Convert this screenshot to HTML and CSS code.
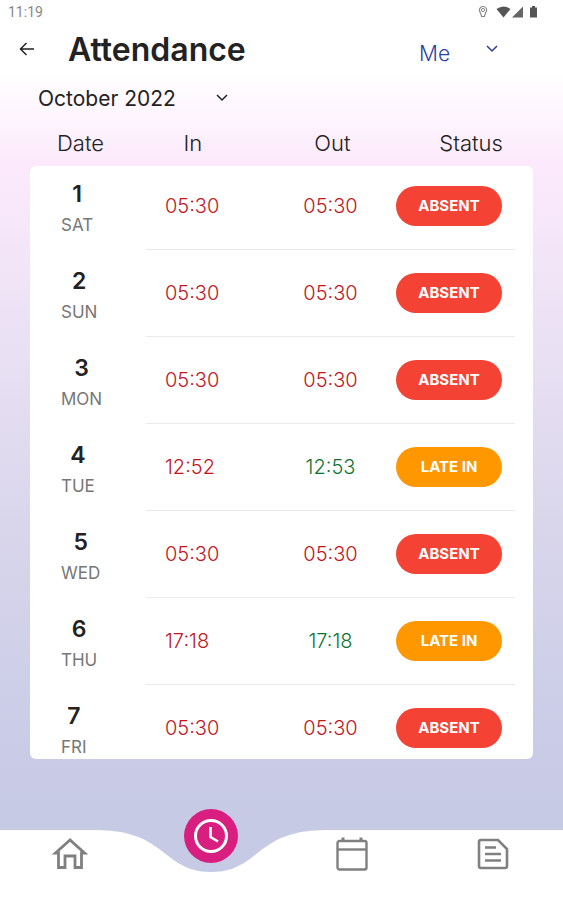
FILE: index.html
```html
<!DOCTYPE html>
<html lang="en">
<head>
  <meta charset="UTF-8">
  <meta name="viewport" content="width=device-width, initial-scale=1.0">
  <title>Attendance</title>
  <link rel="stylesheet" href="styles.css">
</head>
<body>
  <div class="status-bar">
    <span>11:19</span>
    <svg class="status-icons" width="60" height="14" viewBox="0 0 60 14" aria-hidden="true">
      <path d="M5 1.500a3.600 3.600 0 0 0-3.600 3.600c0 1.800 1.600 3 2.200 6.400h2.800c.6-3.400 2.200-4.600 2.200-6.400A3.600 3.600 0 0 0 5 1.500z" fill="none" stroke="#888" stroke-width="1.200"/>
      <circle cx="5" cy="5" r="1.600" fill="none" stroke="#888"/>
      <path d="M18.500 4q7-5 14 0l-7 8.500z" fill="#555"/>
      <path d="M34 12.500h11V1.500z" fill="#666"/>
      <path d="M52 2.500h2V1h3v1.500h2V12.500h-7z" fill="#555"/>
    </svg>
  </div>

  <header class="header">
    <button class="back" aria-label="Back">
      <svg width="16" height="16" viewBox="0 0 16 16"><path d="M15 8H2M7.500 2L1.500 8L7.500 14"/></svg>
    </button>
    <h1>Attendance</h1>
    <div class="picker person">
      <select aria-label="Person">
        <option>Me</option>
      </select>
      <svg width="12" height="8" viewBox="0 0 12 8"><path d="M1 1l5 5l5-5"/></svg>
    </div>
  </header>

  <div class="picker month">
    <select aria-label="Month">
      <option>October 2022</option>
    </select>
    <svg width="12" height="8" viewBox="0 0 12 8"><path d="M1 1l5 5l5-5"/></svg>
  </div>

  <table class="attendance">
    <thead>
      <tr><th>Date</th><th>In</th><th>Out</th><th>Status</th></tr>
    </thead>
    <tbody>
      <tr>
        <td class="date"><div><b>1</b><span>SAT</span></div></td>
        <td class="in">05:30</td>
        <td class="out">05:30</td>
        <td class="status"><span class="badge absent">ABSENT</span></td>
      </tr>
      <tr>
        <td class="date"><div><b>2</b><span>SUN</span></div></td>
        <td class="in">05:30</td>
        <td class="out">05:30</td>
        <td class="status"><span class="badge absent">ABSENT</span></td>
      </tr>
      <tr>
        <td class="date"><div><b>3</b><span>MON</span></div></td>
        <td class="in">05:30</td>
        <td class="out">05:30</td>
        <td class="status"><span class="badge absent">ABSENT</span></td>
      </tr>
      <tr>
        <td class="date"><div><b>4</b><span>TUE</span></div></td>
        <td class="in">12:52</td>
        <td class="out ok">12:53</td>
        <td class="status"><span class="badge late">LATE IN</span></td>
      </tr>
      <tr>
        <td class="date"><div><b>5</b><span>WED</span></div></td>
        <td class="in">05:30</td>
        <td class="out">05:30</td>
        <td class="status"><span class="badge absent">ABSENT</span></td>
      </tr>
      <tr>
        <td class="date"><div><b>6</b><span>THU</span></div></td>
        <td class="in">17:18</td>
        <td class="out ok">17:18</td>
        <td class="status"><span class="badge late">LATE IN</span></td>
      </tr>
      <tr>
        <td class="date"><div><b>7</b><span>FRI</span></div></td>
        <td class="in">05:30</td>
        <td class="out">05:30</td>
        <td class="status"><span class="badge absent">ABSENT</span></td>
      </tr>
    </tbody>
  </table>

  <nav class="tabs">
    <a href="#" aria-label="Home">
      <svg width="36" height="32" viewBox="0 0 36 32" fill="none" stroke="#808080" stroke-width="2.800"><path d="M18 2L3.500 15H6.500V29.500H13V18H23V29.500H29.500V15H32.500z"/></svg>
    </a>
    <div class="notch">
      <svg class="wave" width="240" height="43" viewBox="0 0 240 43"><path d="M0 0C40 0 55 8 76 25C92 38 104 42 120 42C136 42 148 38 164 25C185 8 200 0 240 0z" fill="#c7cae5"/></svg>
      <a class="clock" href="#" aria-label="Attendance">
        <svg width="36" height="36" viewBox="0 0 36 36" fill="none" stroke="#fff"><circle cx="18" cy="18" r="15.500" stroke-width="3"/><path d="M17.500 9v10l7.500 4.500" stroke-width="2.600"/></svg>
      </a>
    </div>
    <a href="#" aria-label="Calendar">
      <svg width="32" height="34" viewBox="0 0 32 34" fill="none" stroke="#808080" stroke-width="2.400"><rect x="1.500" y="4" width="29" height="28.500" rx="2"/><path d="M1.500 12.500h29"/><path d="M7 0.500v3.500M25 0.500v3.500" stroke-width="3"/></svg>
    </a>
    <a href="#" aria-label="Reports">
      <svg width="32" height="32" viewBox="0 0 32 32" fill="none" stroke="#808080" stroke-width="2.600"><path d="M4 2h17l9 9v17a2 2 0 0 1-2 2H4a2 2 0 0 1-2-2V4a2 2 0 0 1 2-2z"/><path d="M8 9.500h11M8 16h16M8 22.500h16"/></svg>
    </a>
  </nav>
</body>
</html>
```

FILE: styles.css
```css
* {
  box-sizing: border-box;
}
body {
  display: flex;
  flex-direction: column;
  height: 100vh;
  margin: 0;
  overflow: hidden;
  font-family: Inter, "Liberation Sans", sans-serif;
  color: #222;
  background: linear-gradient(#fff 0, #fff 8%, #fceafc 18%, #e9e0f3 39%, #d9d6eb 58%, #cdcee8 76%, #c7cae5 90%);
}
.status-bar {
  display: flex;
  justify-content: space-between;
  align-items: center;
  height: 24px;
  padding: 0 25px 0 8px;
  font-family: Roboto, sans-serif;
  font-size: 14px;
  color: #888;
}
.header {
  display: flex;
  align-items: center;
  height: 50px;
  padding: 0 65px 0 19px;
}
.back {
  display: flex;
  padding: 0;
  border: 0;
  background: none;
  color: #222;
}
.back svg,
.picker svg {
  fill: none;
  stroke: currentColor;
  stroke-width: 1.5;
}
h1 {
  flex: 1;
  margin: 0 0 0 33px;
  font-size: 32px;
  font-weight: 600;
}
.picker {
  display: flex;
  align-items: center;
}
.picker select {
  appearance: none;
  padding: 0;
  border: 0;
  background: none;
  font-family: inherit;
  font-size: 21px;
  color: inherit;
}
.picker svg {
  pointer-events: none;
}
.person {
  gap: 35px;
  color: #2c3e9e;
}
.person select {
  padding-top: 8px;
  font-weight: 300;
}
.month {
  gap: 40px;
  height: 48px;
  padding-left: 38px;
}

.attendance {
  display: flex;
  flex: 1;
  flex-direction: column;
  min-height: 0;
  margin: 0 30px 71px;
}
.attendance th,
.attendance td {
  padding: 0;
}
.attendance thead tr {
  display: grid;
  grid-template-columns: 94px 139fr 143fr 131fr;
  padding-bottom: 2px;
}
.attendance th {
  font-size: 22px;
  font-weight: 300;
  line-height: 42px;
}
.attendance th:first-child {
  padding-left: 27px;
  text-align: left;
}
.attendance th:last-child {
  padding-left: 6px;
}
.attendance tbody {
  flex: 1;
  min-height: 0;
  overflow-y: auto;
  scrollbar-width: none;
  border-radius: 6px;
  background: #fff;
}
.attendance tbody tr {
  display: grid;
  grid-template-columns: 116px 1fr 1fr 1fr;
  height: 87px;
  padding-right: 18px;
}
.attendance tbody tr:first-child {
  margin-top: -3px;
}
.attendance td {
  display: flex;
  align-items: center;
  border-bottom: 1px solid #ebebeb;
  font-size: 20px;
  font-weight: 300;
  color: #c0161c;
}
.attendance .date {
  padding-left: 31px;
  border: 0;
  color: #777;
}
.date div {
  display: flex;
  flex-direction: column;
  align-items: center;
  padding-top: 4px;
}
.date b {
  font-size: 23px;
  font-weight: 600;
  line-height: 32px;
  color: #222;
}
.date span {
  font-size: 17px;
  font-weight: 400;
  line-height: 30px;
}
.attendance .in {
  padding-left: 19px;
}
.attendance .out {
  justify-content: center;
}
.attendance .ok {
  color: #0d7332;
}
.attendance .status {
  justify-content: flex-end;
  padding-right: 13px;
}
.badge {
  width: 106px;
  border-radius: 20px;
  font-size: 15px;
  font-weight: 700;
  line-height: 40px;
  text-align: center;
  color: #fff;
}
.absent {
  background: #f44334;
}
.late {
  background: #ff9800;
}

.tabs {
  display: grid;
  grid-template-columns: repeat(4, 1fr);
  height: 70px;
  padding-bottom: 22px;
  background: #fff;
}
.tabs a {
  display: flex;
  justify-content: center;
  align-items: center;
}
.notch {
  position: relative;
}
/* dip in the bar with the raised button over it */
.wave {
  position: absolute;
  top: 0;
  left: 50%;
  margin-left: -120px;
  pointer-events: none;
}
.notch .clock {
  position: absolute;
  top: -21px;
  left: 50%;
  width: 54px;
  height: 54px;
  margin-left: -27px;
  border-radius: 50%;
  background: #d81f80;
}
```
